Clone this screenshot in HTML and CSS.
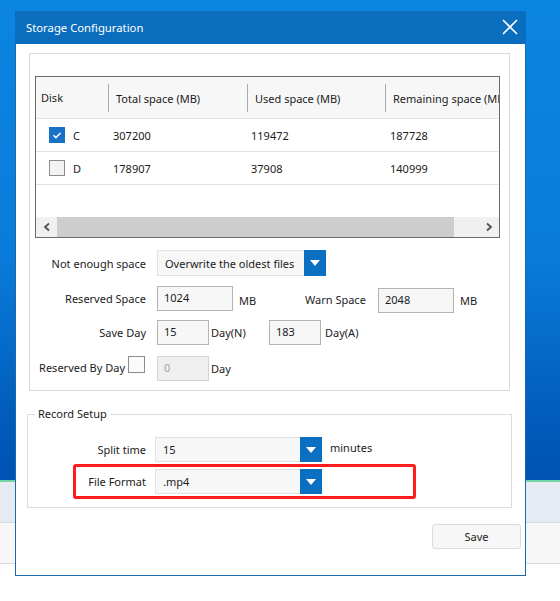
FILE: index.html
```html
<!DOCTYPE html>
<html>
<head>
<meta charset="utf-8">
<link rel="stylesheet" href="styles.css">
</head>
<body>
<div class="desktop">
  <div class="dialog">
    <div class="titlebar">
      <span class="title">Storage Configuration</span>
      <svg class="close" width="16" height="16" viewBox="0 0 16 16"><path d="M1 1L15 15M15 1L1 15" stroke="#fff" stroke-width="1.6" fill="none"/></svg>
    </div>

    <div class="panel">
      <div class="table">
        <div class="thead">
          <div class="th c1">Disk</div>
          <div class="th c2 sep">Total space (MB)</div>
          <div class="th c3 sep">Used space (MB)</div>
          <div class="th c4 sep">Remaining space (MB)</div>
        </div>
        <div class="tr">
          <div class="td c1"><span class="cb checked"><svg width="16" height="16" viewBox="0 0 16 16"><path d="M4 8.2L6.8 11L12 5.6" stroke="#fff" stroke-width="1.7" fill="none"/></svg></span><span>C</span></div>
          <div class="td c2">307200</div>
          <div class="td c3">119472</div>
          <div class="td c4">187728</div>
        </div>
        <div class="tr">
          <div class="td c1"><span class="cb"></span><span>D</span></div>
          <div class="td c2">178907</div>
          <div class="td c3">37908</div>
          <div class="td c4">140999</div>
        </div>
        <div class="tfill"></div>
        <div class="hscroll">
          <div class="sbtn"><svg width="10" height="10" viewBox="0 0 10 10"><path d="M7 1.5L3 5L7 8.5" stroke="#505050" stroke-width="1.8" fill="none"/></svg></div>
          <div class="thumb"></div>
          <div class="track"></div>
          <div class="sbtn"><svg width="10" height="10" viewBox="0 0 10 10"><path d="M3 1.5L7 5L3 8.5" stroke="#505050" stroke-width="1.8" fill="none"/></svg></div>
        </div>
      </div>

      <div class="form">
        <div class="row row-a">
          <div class="lbl">Not enough space</div>
          <div class="select sel-wide"><span class="sel-text">Overwrite the oldest files</span><span class="sel-btn"><span class="tri"></span></span></div>
        </div>
        <div class="row row-b">
          <div class="lbl">Reserved Space</div>
          <div class="input in-75">1024</div>
          <div class="unit unit-mb">MB</div>
          <div class="lbl2">Warn Space</div>
          <div class="input in-75 in-warn">2048</div>
          <div class="unit unit-mb2">MB</div>
        </div>
        <div class="row row-c">
          <div class="lbl">Save Day</div>
          <div class="input in-52">15</div>
          <div class="unit unit-dayn">Day(N)</div>
          <div class="input in-52">183</div>
          <div class="unit unit-daya">Day(A)</div>
        </div>
        <div class="row row-d">
          <div class="lbl lbl-cb"><span class="lbl-cb-text">Reserved By Day</span><span class="cb cb-small"></span></div>
          <div class="input in-52 disabled">0</div>
          <div class="unit unit-day">Day</div>
        </div>
      </div>
    </div>

    <fieldset class="group">
      <legend>Record Setup</legend>
      <div class="grow grow-split">
        <div class="glbl">Split time</div>
        <div class="select sel-mid"><span class="sel-text">15</span><span class="sel-btn"><span class="tri"></span></span></div>
        <div class="unit unit-min">minutes</div>
      </div>
      <div class="grow grow-format">
        <div class="glbl">File Format</div>
        <div class="select sel-mid"><span class="sel-text">.mp4</span><span class="sel-btn"><span class="tri"></span></span></div>
      </div>
    </fieldset>

    <div class="actions">
      <button class="btn">Save</button>
    </div>
  </div>
</div>
</body>
</html>
```

FILE: styles.css
```css
html, body {
  margin: 0;
  padding: 0;
  background: #fff;
}

.desktop {
  width: 560px;
  height: 601px;
  overflow: hidden;
  padding-top: 11px;
  box-sizing: border-box;
  font-family: "Noto Sans", "Open Sans", sans-serif;
  font-size: 11px;
  color: #1b1b1b;
  background:
    linear-gradient(180deg,
      #0b86e0 0px, #0a7bd8 260px, #0058b7 440px, #0053b2 480px,
      #72d6a0 480px, #72d6a0 482px,
      #e6ebf3 482px, #e6ebf3 522px,
      #d6d9de 522px, #d6d9de 523px,
      #f7f7f7 523px, #f7f7f7 563px,
      #dcdcdc 563px, #dcdcdc 564px,
      #ffffff 564px);
}

.dialog {
  margin-left: 15px;
  width: 511px;
  height: 565px;
  box-sizing: border-box;
  border: 1px solid #1a68b0;
  border-top: none;
  background: #fff;
}

.titlebar {
  height: 33px;
  background: #0b6dbd;
  display: flex;
  align-items: center;
  justify-content: space-between;
  margin: 0 -1px;
  padding: 0 8px 0 11px;
}

.title {
  color: #fff;
  font-size: 11.3px;
}

.close {
  display: block;
  margin-top: -1px;
}

.panel {
  margin: 9px 0 0 13px;
  width: 481px;
  height: 338px;
  box-sizing: border-box;
  border: 1px solid #d9d9d9;
  padding: 22px 0 0 5px;
}

.table {
  width: 465px;
  height: 162px;
  box-sizing: border-box;
  border: 1px solid #6a6a6a;
  display: flex;
  flex-direction: column;
  overflow: hidden;
}

.thead, .tr {
  display: grid;
  grid-template-columns: 72px 139px 138px 114px;
}

.thead {
  height: 42px;
  background: #f7f7f7;
  border-bottom: 1px solid #e3e3e3;
  box-sizing: border-box;
}

.th {
  display: flex;
  align-items: center;
  white-space: nowrap;
  overflow: hidden;
  padding-left: 7px;
}

.th.c1 {
  padding-left: 5px;
}

.th.sep {
  border-left: 1px solid #ababab;
  margin: 7px 0 6px;
}

.tr {
  height: 33px;
  border-bottom: 1px solid #e3e3e3;
  box-sizing: border-box;
}

.td {
  display: flex;
  align-items: center;
  padding-left: 5px;
  white-space: nowrap;
}

.td.c1 {
  padding-left: 13px;
  gap: 8px;
}

.td.c3 {
  padding-left: 4px;
}

.cb {
  width: 16px;
  height: 16px;
  box-sizing: border-box;
  border: 1px solid #8c8c8c;
  background: #f3f3f3;
  display: inline-flex;
  align-items: center;
  justify-content: center;
}

.cb.checked {
  background: #1a72c6;
  border-color: #1a72c6;
}

.cb svg {
  display: block;
}

.tfill {
  flex: 1;
}

.hscroll {
  height: 20px;
  display: flex;
  background: #f0f0f0;
}

.sbtn {
  width: 21px;
  display: flex;
  align-items: center;
  justify-content: center;
}

.thumb {
  width: 397px;
  background: #cdcdcd;
}

.track {
  flex: 1;
}

.form {
  margin-left: -5px;
}

.row {
  display: flex;
  align-items: center;
}

.row-a { margin-top: 12px; height: 26px; }
.row-b { margin-top: 10px; height: 25px; }
.row-c { margin-top: 9px; height: 25px; }
.row-d { margin-top: 11px; height: 25px; }

.lbl {
  width: 116px;
  text-align: right;
  margin-right: 11px;
  white-space: nowrap;
}

.lbl-cb {
  display: flex;
  justify-content: flex-end;
  align-items: center;
  gap: 3px;
  align-self: stretch;
  padding-right: 1px;
  box-sizing: border-box;
}

.lbl-cb-text {
  margin-top: -3px;
}

.cb-small {
  width: 17px;
  height: 17px;
  background: #fbfbfb;
  align-self: flex-start;
}

.select {
  height: 26px;
  box-sizing: border-box;
  border: 1px solid #e2e2e2;
  background: #f7f7f7;
  display: flex;
  align-items: center;
}

.sel-wide {
  width: 169px;
}

.sel-mid {
  width: 167px;
  height: 25px;
}

.sel-text {
  flex: 1;
  padding-left: 7px;
  white-space: nowrap;
  overflow: hidden;
}

.sel-btn {
  width: 22px;
  align-self: stretch;
  margin: -1px -1px -1px 0;
  background: #0b6fc2;
  display: flex;
  align-items: center;
  justify-content: center;
}

.tri {
  width: 0;
  height: 0;
  border-left: 5px solid transparent;
  border-right: 5px solid transparent;
  border-top: 6px solid #fff;
}

.input {
  height: 25px;
  box-sizing: border-box;
  border: 1px solid #b4b4b4;
  background: #f7f7f7;
  padding: 4px 0 0 6px;
  line-height: 14px;
}

.in-75 { width: 76px; }
.in-52 { width: 52px; }

.in-warn {
  margin-top: 3px;
}

.input.disabled {
  background: #f0f0f0;
  border-color: #d4d4d4;
  color: #a2a2a2;
}

.unit {
  margin-left: 6px;
  white-space: nowrap;
}

.unit-mb {
  width: 66px;
  margin-top: 3px;
}

.unit-mb2 {
  margin-top: 3px;
}

.lbl2 {
  margin-right: 11px;
  width: 62px;
  white-space: nowrap;
  margin-top: 1px;
}

.unit-dayn {
  margin-left: 2px;
  width: 58px;
}

.unit-daya {
  margin-left: 4px;
}

.unit-day {
  margin-left: 2px;
}

.group {
  margin: 15px 0 0 11px;
  padding: 0 0 8px 0;
  width: 485px;
  box-sizing: border-box;
  border: 1px solid #dcdcdc;
  min-width: 0;
}

.group legend {
  margin-left: 7px;
  padding: 0 3px;
  line-height: 16px;
  font-size: 11px;
}

.grow {
  display: flex;
  align-items: center;
}

.grow-split {
  margin-top: 15px;
  padding-left: 48px;
}

.grow-format {
  margin: 2px 0 0 45px;
  width: 343px;
  height: 35px;
  box-sizing: border-box;
  border: 3px solid #ff1c1c;
  border-radius: 3px;
  padding: 2px 0;
}

.glbl {
  width: 70px;
  text-align: right;
  margin-right: 9px;
  white-space: nowrap;
}

.unit-min {
  margin-left: 8px;
  margin-top: -5px;
}

.actions {
  display: flex;
  justify-content: flex-end;
  padding: 16px 4px 0 0;
}

.btn {
  width: 89px;
  height: 25px;
  box-sizing: border-box;
  border: 1px solid #dcdcdc;
  border-radius: 3px;
  background: #f7f7f7;
  font-family: "Noto Sans", "Open Sans", sans-serif;
  font-size: 11px;
  color: #1b1b1b;
  padding: 0;
}
```
